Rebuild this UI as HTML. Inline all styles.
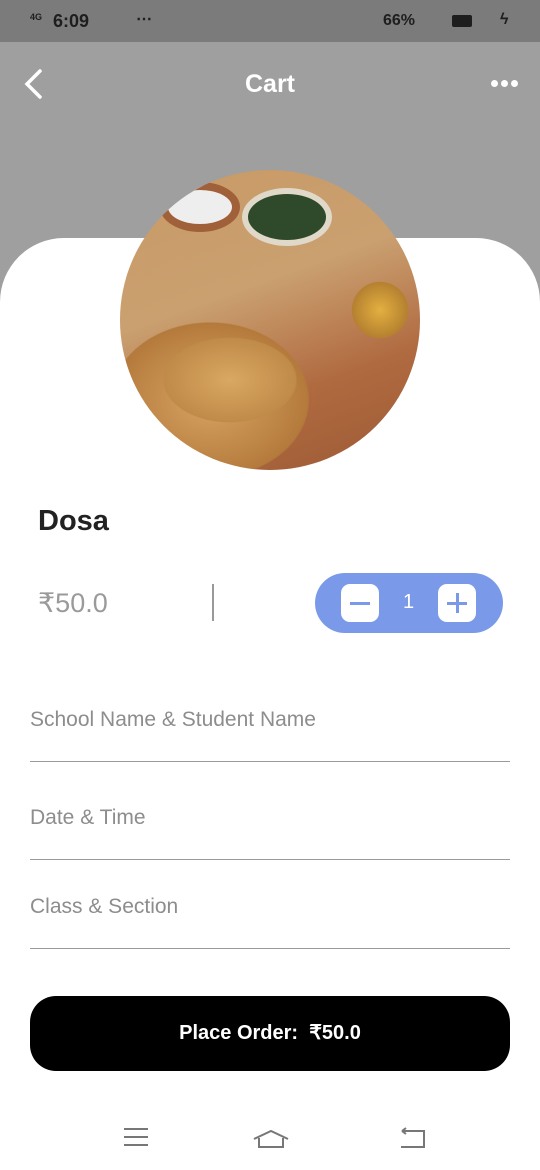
<!DOCTYPE html>
<html><head><meta charset="utf-8"><style>
*{margin:0;padding:0;box-sizing:border-box}
body{width:540px;height:1170px;overflow:hidden;background:#fff;font-family:"Liberation Sans",sans-serif;position:relative}
.sb{position:absolute;top:0;left:0;width:540px;height:42px;background:#7b7b7b;color:#1e1e1e;font-size:16px;font-weight:bold}
.hdr{position:absolute;top:42px;left:0;width:540px;height:260px;background:#9f9f9f}
.card{position:absolute;top:238px;left:0;width:540px;height:932px;background:#fff;border-radius:64px 64px 0 0}
.t{position:absolute}
.img{position:absolute;left:120px;top:170px;width:300px;height:300px;border-radius:50%;overflow:hidden;
background:radial-gradient(ellipse 110px 70px at 110px 210px,#d9a862,#c08a48 60%,transparent 61%),
radial-gradient(ellipse 140px 110px at 90px 230px,#d7a463,#b47a3c 70%,transparent 71%),
radial-gradient(circle 40px at 260px 140px,#e2b040,#b58030 70%,transparent 71%),
linear-gradient(160deg,#c89a66 0%,#caa070 40%,#b06a40 70%,#9c5a34 100%)}
.field{position:absolute;left:30px;width:480px;border-bottom:1.5px solid #9a9a9a;color:#8d8d8d;font-size:21px;padding-top:2px}
</style></head><body>
<div class="sb"><span class="t" style="left:30px;top:12px;font-size:9px">4G</span><span class="t" style="left:53px;top:11px;font-size:18px">6:09</span><span class="t" style="left:136px;top:9px">⋯</span>
<span class="t" style="left:383px;top:12px;font-size:16px">66%</span><div class="t" style="left:452px;top:15px;width:20px;height:12px;background:#1e1e1e;border-radius:2px"></div><span class="t" style="left:500px;top:11px">ϟ</span></div>
<div class="hdr"></div>
<svg class="t" style="left:22px;top:68px" width="22" height="32"><path d="M18 3 L5 16 L18 29" stroke="#fff" stroke-width="3.5" fill="none" stroke-linecap="round"/></svg>
<div class="t" style="left:0;width:540px;top:70px;text-align:center;color:#fff;font-size:25px;font-weight:bold">Cart</div>
<div class="t" style="left:491px;top:80px;display:flex;gap:3px"><i style="width:7px;height:7px;background:#fff;border-radius:50%"></i><i style="width:7px;height:7px;background:#fff;border-radius:50%"></i><i style="width:7px;height:7px;background:#fff;border-radius:50%"></i></div>
<div class="card"></div>
<div class="img"><div class="t" style="left:40px;top:12px;width:80px;height:50px;border-radius:50%;background:#eee;border:8px solid #a0603a"></div><div class="t" style="left:122px;top:18px;width:90px;height:58px;border-radius:50%;background:#2f4a2a;border:6px solid #e0d8c8"></div></div>
<div class="t" style="left:38px;top:505px;font-size:29px;font-weight:bold;color:#222">Dosa</div>
<div class="t" style="left:38px;top:588px;font-size:27px;color:#9a9a9a">₹50.0</div>
<div class="t" style="left:212px;top:584px;width:2px;height:37px;background:#999"></div>
<div class="t" style="left:315px;top:573px;width:188px;height:60px;border-radius:30px;background:#7a9ae9"></div>
<div class="t" style="left:341px;top:584px;width:38px;height:38px;border-radius:9px;background:#fff"><div class="t" style="left:9px;top:18px;width:20px;height:3px;background:#7a9ae9"></div></div>
<div class="t" style="left:403px;top:591px;font-size:20px;color:#fff">1</div>
<div class="t" style="left:438px;top:584px;width:38px;height:38px;border-radius:9px;background:#fff"><div class="t" style="left:9px;top:18px;width:20px;height:3px;background:#7a9ae9"></div><div class="t" style="left:18px;top:9px;width:3px;height:20px;background:#7a9ae9"></div></div>
<div class="field" style="top:706px;height:56px">School Name &amp; Student Name</div>
<div class="field" style="top:804px;height:56px">Date &amp; Time</div>
<div class="field" style="top:893px;height:56px">Class &amp; Section</div>
<div class="t" style="left:30px;top:996px;width:480px;height:75px;border-radius:26px;background:#000;color:#fff;font-size:20px;font-weight:bold;text-align:center;line-height:75px">Place Order:&nbsp; ₹50.0</div>
<svg class="t" style="left:120px;top:1125px" width="320" height="30" fill="none" stroke="#777" stroke-width="2">
<path d="M4 4H28M4 12H28M4 20H28"/><path d="M134 14L151 6L168 14M139 13V22H163V13"/><path d="M282 6H304V22H281M282 6L286 3M282 6L286 9"/></svg>
</body></html>
